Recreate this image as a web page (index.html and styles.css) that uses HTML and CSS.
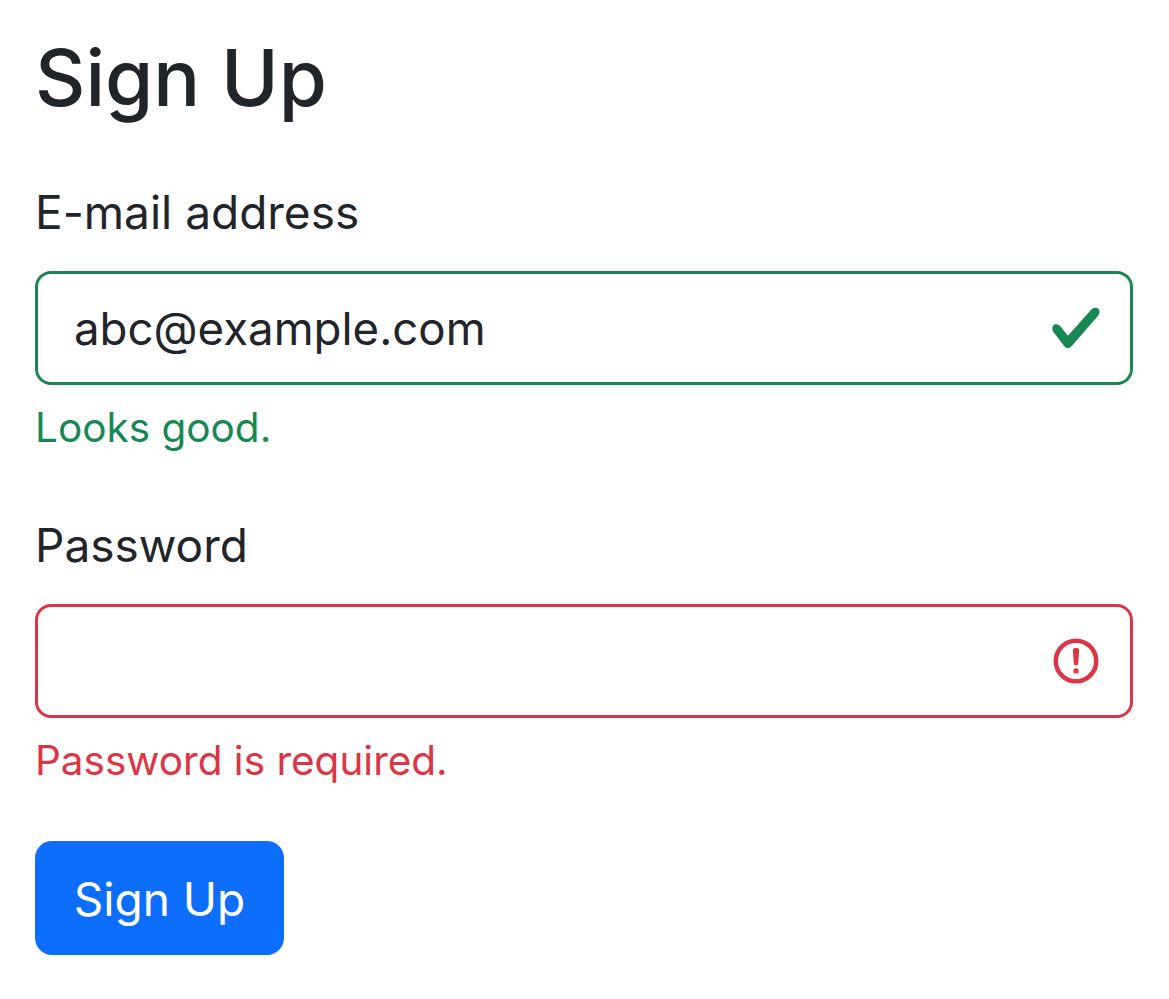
FILE: index.html
```html
<!DOCTYPE html>
<html lang="en">
<head>
   <meta charset="utf-8">
   <title>Sign Up</title>
   <link rel="stylesheet" href="styles.css">
</head>
<body>
   <h1>Sign Up</h1>
   <form>
      <div class="field">
         <label for="email">E-mail address</label>
         <div class="control valid">
            <input id="email" type="text" value="abc@example.com">
            <svg class="state" width="54" height="54" viewBox="0 0 8 8"><path fill="#198754" d="M2.3 6.73.6 4.53c-.4-1.04.46-1.4 1.1-.8l1.1 1.4 3.4-3.8c.6-.63 1.6-.27 1.2.7l-4 4.6c-.43.5-.8.4-1.1.1z"/></svg>
         </div>
         <div class="note ok">Looks good.</div>
      </div>
      <div class="field">
         <label for="password">Password</label>
         <div class="control invalid">
            <input id="password" type="password">
            <svg class="state" width="54" height="54" viewBox="0 0 12 12" fill="none" stroke="#dc3545"><circle cx="6" cy="6" r="4.5"/><path stroke-linejoin="round" d="M5.8 3.6h.4L6 6.5z"/><circle cx="6" cy="8.2" r=".6" fill="#dc3545" stroke="none"/></svg>
         </div>
         <div class="note bad">Password is required.</div>
      </div>
      <button type="button">Sign Up</button>
   </form>
</body>
</html>
```

FILE: styles.css
```css
body {
   margin: 0;
   padding: 36px 36px 0 35px;
   color: #212529;
   background: #fff;
   font-family: Inter, "Liberation Sans", sans-serif;
   font-size: 46px;
   line-height: 1.5;
}
h1 {
   margin: 0 0 59px;
   font-size: 78px;
   font-weight: 500;
   line-height: 84px;
}
label {
   display: block;
   margin-bottom: 26px;
   line-height: 66px;
}
.field {
   margin-bottom: 55px;
}
.field:last-of-type {
   margin-bottom: 51px;
}
.control {
   display: flex;
   align-items: center;
   justify-content: flex-end;
   box-sizing: border-box;
   position: relative;
   height: 114px;
   width: 1098px;
   border: 3px solid;
   border-radius: 16px;
}
.control input {
   position: absolute;
   left: 0;
   top: 0;
   width: 100%;
   height: 100%;
   box-sizing: border-box;
   padding: 1px 90px 0 36px;
   border: 0;
   background: none;
   outline: 0;
   color: #212529;
   font: inherit;
   font-size: 45.6px;
}
.state {
   margin-right: 27px;
}
.valid { border-color: #198754; }
.invalid { border-color: #dc3545; }
.note {
   margin-top: 14px;
   font-size: 40.5px;
   line-height: 58px;
}
.ok { color: #198754; }
.bad { color: #dc3545; }
button {
   display: block;
   width: 249px;
   height: 114px;
   padding: 2px 0 0;
   border: 0;
   border-radius: 17px;
   background: #0d6efd;
   color: #fff;
   font: inherit;
}
```
